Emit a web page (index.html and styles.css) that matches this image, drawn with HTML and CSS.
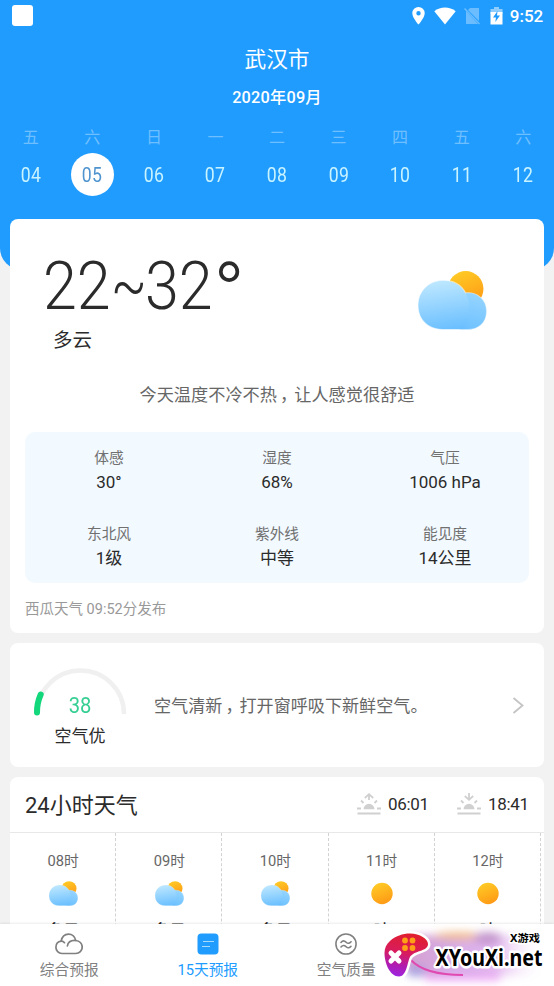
FILE: index.html
```html
<!DOCTYPE html>
<html lang="zh-CN">
<head>
<meta charset="utf-8">
<title>武汉市天气</title>
<link rel="stylesheet" href="styles.css">
</head>
<body>
<svg width="0" height="0" class="defs">
  <defs>
    <linearGradient id="sun" x1="0.3" y1="0" x2="0.7" y2="1"><stop offset="0" stop-color="#ffcb25"/><stop offset="1" stop-color="#ff9815"/></linearGradient>
    <linearGradient id="cloud" x1="0.3" y1="0" x2="0.5" y2="1"><stop offset="0" stop-color="#bfe8ff"/><stop offset="1" stop-color="#6abfff"/></linearGradient>
    <linearGradient id="puff" x1="0" y1="0.6" x2="1" y2="0.4"><stop offset="0" stop-color="#6cbdfb"/><stop offset="0.35" stop-color="#7dc9ff"/><stop offset="1" stop-color="#8fd2ff"/></linearGradient>
    <symbol id="cloudy" viewBox="0 0 68 58">
      <circle cx="47" cy="17.500" r="17.500" fill="url(#sun)"/>
      <path d="M25 9c10 0 18 5 22 12.500C58.500 20.500 67.500 28 67.500 39.500S59.500 57.500 49.500 57.500H24C9 57.500 0 47 0 34 0 19 11 9 25 9z" fill="url(#cloud)" stroke="#fff" stroke-opacity=".55" stroke-width="1"/>
      <path d="M47 21.500c11-1.500 20.500 6.500 20.500 17.500S59.500 57.500 49.500 57.500H41c7-6 10-14 9.500-24-.3-4-1.400-8-3.500-12z" fill="url(#puff)" opacity=".4"/>
    </symbol>
    <symbol id="sunny" viewBox="0 0 22 22"><circle cx="11" cy="11" r="10.700" fill="url(#sun)"/></symbol>
  </defs>
</svg>
<div class="app">
  <main class="content">
    <header class="hero">
      <div class="status">
        <span class="app-mark"></span>
        <div class="status-icons">
          <svg width="13" height="18" viewBox="0 0 13 18"><path fill="#fff" fill-rule="evenodd" d="M6.500 0A6.200 6.200 0 0 0 .300 6.200C.300 10.800 6.500 17.500 6.500 17.500s6.200-6.700 6.200-11.300A6.200 6.200 0 0 0 6.500 0zm0 4a2.200 2.200 0 1 1 0 4.400 2.200 2.200 0 0 1 0-4.400z"/></svg>
          <svg width="22" height="18" viewBox="0 0 22 18"><path fill="#fff" d="M.300 4.300C6.500-.700 15.500-.700 21.700 4.300L11 17.500z"/></svg>
          <svg width="17" height="18" viewBox="0 0 17 18"><path fill="#6bbdff" d="M6 1h9v13L4 3zM2 4l12 13H2z"/><path d="M.500 1.500l15 15.500" stroke="#6bbdff" stroke-width="1.500"/></svg>
          <svg width="13" height="18" viewBox="0 0 13 18"><path fill="#8fcdff" d="M4 0h5v2h3.500v5H.500V2H4z"/><path fill="#fff" d="M.500 5h12v12.500H.500z"/><path fill="#209cff" d="M7.500 4L3 10.500h3L5.300 15 10 8.500H7z"/></svg>
          <span class="clock">9:52</span>
        </div>
      </div>
      <h1 class="city">武汉市</h1>
      <div class="month">2020年09月</div>
      <div class="week">
        <div class="day"><span class="dow">五</span><span class="date"><b>04</b></span></div>
        <div class="day selected"><span class="dow">六</span><span class="date"><b>05</b></span></div>
        <div class="day"><span class="dow">日</span><span class="date"><b>06</b></span></div>
        <div class="day"><span class="dow">一</span><span class="date"><b>07</b></span></div>
        <div class="day"><span class="dow">二</span><span class="date"><b>08</b></span></div>
        <div class="day"><span class="dow">三</span><span class="date"><b>09</b></span></div>
        <div class="day"><span class="dow">四</span><span class="date"><b>10</b></span></div>
        <div class="day"><span class="dow">五</span><span class="date"><b>11</b></span></div>
        <div class="day"><span class="dow">六</span><span class="date"><b>12</b></span></div>
      </div>
    </header>

    <section class="card today">
      <div class="summary">
        <div>
          <div class="temp"><span class="num">22</span><span class="tilde">~</span><span class="num">32</span><span class="deg">°</span></div>
          <div class="cond">多云</div>
        </div>
        <svg class="big-icon" width="69" height="59"><use href="#cloudy"/></svg>
      </div>
      <p class="advice">今天温度不冷不热<span class="comma">，</span>让人感觉很舒适</p>
      <div class="metrics">
        <div class="metric"><span>体感</span><strong>30°</strong></div>
        <div class="metric"><span>湿度</span><strong>68%</strong></div>
        <div class="metric"><span>气压</span><strong>1006 hPa</strong></div>
        <div class="metric"><span>东北风</span><strong>1级</strong></div>
        <div class="metric"><span>紫外线</span><strong>中等</strong></div>
        <div class="metric"><span>能见度</span><strong>14公里</strong></div>
      </div>
      <div class="source">西瓜天气 09:52分发布</div>
    </section>

    <section class="card air">
      <div class="gauge">
        <svg width="94" height="52" viewBox="0 0 94 52">
          <path d="M4 48A43.500 43.500 0 0 1 91 48" fill="none" stroke="#f0f0f0" stroke-width="4.500"/>
          <path d="M4 46.500A43.500 43.500 0 0 1 7.700 28.500" fill="none" stroke="#12d77b" stroke-width="6" stroke-linecap="round"/>
        </svg>
        <span class="aqi">38</span>
        <span class="level">空气优</span>
      </div>
      <p class="tip">空气清新<span class="comma">，</span>打开窗呼吸下新鲜空气。</p>
      <svg class="chevron" width="12" height="17" viewBox="0 0 12 17"><path d="M1.500 1l9 7.500-9 7.500" fill="none" stroke="#c4c4c4" stroke-width="1.800"/></svg>
    </section>

    <section class="card hourly">
      <div class="hourly-head">
        <h2>24小时天气</h2>
        <div class="sun-time">
          <svg width="24" height="22" viewBox="0 0 24 22" fill="none" stroke="#d0d0d0" stroke-width="1.800"><path d="M.500 20.500h23M12 7V1.500M7.800 5L12 1.200 16.200 5M4 7.500l2.500 2.500M20 7.500L17.500 10M0 15.500h4M20 15.500h4"/><path d="M6.500 16.300a5.500 5.500 0 0 1 11 0z" fill="#d0d0d0" stroke="none"/></svg>
          <span>06:01</span>
        </div>
        <div class="sun-time">
          <svg width="24" height="22" viewBox="0 0 24 22" fill="none" stroke="#d0d0d0" stroke-width="1.800"><path d="M.500 20.500h23M12 0v6.500M7.800 3L12 6.800 16.200 3M4 7.500l2.500 2.500M20 7.500L17.500 10M0 15.500h4M20 15.500h4"/><path d="M6.500 16.300a5.500 5.500 0 0 1 11 0z" fill="#d0d0d0" stroke="none"/></svg>
          <span>18:41</span>
        </div>
      </div>
      <div class="hours">
        <div class="hour"><span>08时</span><svg width="29" height="25"><use href="#cloudy"/></svg><strong>多云</strong></div>
        <div class="hour"><span>09时</span><svg width="29" height="25"><use href="#cloudy"/></svg><strong>多云</strong></div>
        <div class="hour"><span>10时</span><svg width="29" height="25"><use href="#cloudy"/></svg><strong>多云</strong></div>
        <div class="hour"><span>11时</span><svg width="22" height="25"><use href="#sunny"/></svg><strong>晴</strong></div>
        <div class="hour"><span>12时</span><svg width="22" height="25"><use href="#sunny"/></svg><strong>晴</strong></div>
      </div>
    </section>
  </main>

  <nav class="tabs">
    <div class="tab">
      <svg width="28" height="22" viewBox="0 0 28 22" fill="none" stroke="#808080" stroke-width="1.700" stroke-linecap="round"><path d="M7 20.500C3.500 20.500.900 17.700.900 14.200c0-3.300 2.300-5.700 5.300-6.100C7 4 9.700 1.200 13.500 1.200c3.700 0 6.600 2.600 7.200 6.300 3.800.200 6.500 3 6.500 6.500 0 3.600-2.800 6.500-6.500 6.500z"/><path d="M6.200 8.100c1.500 0 2.600.600 3.300 1.600M20.700 7.500c-4.400-.300-7.700 1.700-8.300 5.300"/></svg>
      <span>综合预报</span>
    </div>
    <div class="tab active">
      <svg width="22" height="22" viewBox="0 0 22 22"><rect x=".500" y=".500" width="21" height="21" rx="4" fill="#209cff"/><path d="M6 8.500h11M5 13.500h8" stroke="#a8dcff" stroke-width="1.200"/></svg>
      <span>15天预报</span>
    </div>
    <div class="tab">
      <svg width="24" height="24" viewBox="0 0 24 24" fill="none" stroke="#808080" stroke-width="1.700" stroke-linecap="round"><circle cx="12" cy="12" r="11"/><path d="M6.500 10.300c2.500-3 4.500-1.500 6 0s3.500 1 5-.800M6.500 15.300c2.500-3 4.500-1.500 6 0s3.500 1 5-.800"/></svg>
      <span>空气质量</span>
    </div>
    <div class="tab"></div>
    <svg class="brand" width="176" height="70" viewBox="378 916 176 70">
      <defs>
        <linearGradient id="pad" x1="0.5" y1="0" x2="0.3" y2="1"><stop offset="0" stop-color="#e01e2f"/><stop offset=".45" stop-color="#d81c5e"/><stop offset=".75" stop-color="#b01cb0"/><stop offset="1" stop-color="#9c24e0"/></linearGradient>
        <linearGradient id="glow" x1="0" y1="0" x2="1" y2="0"><stop offset="0" stop-color="#d9a0cd"/><stop offset=".3" stop-color="#d3a9e4"/><stop offset=".65" stop-color="#e3b8ef"/><stop offset="1" stop-color="#fff" stop-opacity="0"/></linearGradient>
        <filter id="soft" x="-20%" y="-40%" width="140%" height="180%"><feGaussianBlur stdDeviation="4"/></filter>
      </defs>
      <g filter="url(#soft)">
        <rect x="404" y="935" width="141" height="41" rx="12" fill="url(#glow)"/>
        <ellipse cx="458" cy="936" rx="24" ry="4" fill="#f1bb8d"/>
        <ellipse cx="488" cy="938" rx="14" ry="6" fill="#c394cc"/>
        <ellipse cx="416" cy="971" rx="10" ry="6" fill="#a9a1df"/>
        <path d="M425 978h75" stroke="#f0a6f6" stroke-width="5"/>
      </g>
      <path d="M411 960c10 11 28 15 52 15" fill="none" stroke="#e04ab0" stroke-width="2"/>
      <path d="M390 941c5-5 13-7.500 20-7.500 10 0 18 5.500 18 10.500 0 8-15 6-18.500 14-2.500 7-3.500 18.500-10.500 18.500-9 0-14.500-13-14.500-23.500 0-5 2-9 5.500-12z" fill="url(#pad)" stroke="#fff" stroke-width="5" stroke-linejoin="round" paint-order="stroke"/>
      <g fill="#ffa116"><circle cx="405" cy="940.500" r="2.900"/><circle cx="412.500" cy="940.500" r="2.900"/><circle cx="405" cy="948" r="2.900"/><circle cx="412.500" cy="948" r="2.900"/></g>
      <path d="M391 953l8 8M399 953l-8 8" stroke="#fff" stroke-width="5" stroke-linecap="round"/>
      <text class="brand-small" x="510" y="942" textLength="30" lengthAdjust="spacingAndGlyphs">X游戏</text>
      <text class="brand-name" x="435.500" y="966" textLength="107" lengthAdjust="spacingAndGlyphs">XYouXi.net</text>
    </svg>
  </nav>
</div>
</body>
</html>
```
FILE: styles.css
```css
* { box-sizing: border-box; margin: 0; padding: 0; }
body {
  width: 554px;
  height: 986px;
  overflow: hidden;
  background: #f2f2f2;
  font-family: Roboto, "Noto Sans CJK SC", sans-serif;
  color: #2b2b2b;
}
svg { display: block; flex: none; }
.defs { position: absolute; }
.app { display: flex; flex-direction: column; height: 986px; }
.content { height: 924px; overflow: hidden; }

.hero {
  height: 270px;
  background: #209cff;
  border-radius: 0 0 22px 22px;
  color: #fff;
  text-align: center;
}
.status { display: flex; justify-content: space-between; height: 32px; padding: 5px 10px 0 12px; }
.app-mark { width: 21px; height: 21px; background: #fff; border-radius: 3px; }
.status-icons { display: flex; align-items: flex-start; padding-top: 2px; }
.status-icons svg:nth-child(2) { margin-left: 9px; }
.status-icons svg:nth-child(3) { margin-left: 8px; }
.status-icons svg:nth-child(4) { margin-left: 9px; }
.clock { width: 35px; margin-left: 6.500px; font-size: 17px; font-weight: 500; line-height: 19px; white-space: nowrap; }
.city { height: 52px; font-size: 21.700px; font-weight: 400; line-height: 55px; }
.month { height: 26px; font-size: 16.300px; font-weight: 500; line-height: 27px; letter-spacing: .2px; }
.week { display: grid; grid-template-columns: repeat(9, 1fr); padding-top: 15px; }
.day { display: flex; flex-direction: column; align-items: center; }
.dow { height: 28px; font-size: 16px; line-height: 26px; color: #6fbfff; }
.date { width: 43px; height: 43px; border-radius: 50%; line-height: 44px; font-size: 20.500px; color: #c9f4ff; }
.date b { display: inline-block; font-weight: 400; letter-spacing: .5px; transform: scaleX(.86); }
.selected .date { background: #fff; color: #4f94cf; }

.card { width: 534px; margin: 0 auto 10px; background: #fff; border-radius: 8px; }
.today { height: 414px; margin-top: -51px; padding: 0 15px; }
.summary { display: flex; justify-content: space-between; height: 158px; }
.temp { display: flex; height: 105px; padding: 27px 0 0 18px; font-size: 67px; font-weight: 300; line-height: 80px; white-space: nowrap; }
.temp span { transform-origin: left; }
.num { width: 69px; transform: scaleX(.91); }
.tilde { width: 33px; transform: translate(-1px, -1px) scaleX(.78); }
.deg { margin-left: -1px; font-size: 85px; line-height: 97px; font-weight: 300; }
.cond { padding-left: 28px; font-size: 19.500px; line-height: 33px; }
.big-icon { margin: 52px 42px 0 0; }
.advice { height: 55px; color: #666; font-size: 17.200px; line-height: 36px; text-align: center; }
.comma { display: inline-block; transform: translateX(3px); }
.metrics { display: grid; grid-template-columns: repeat(3, 1fr); height: 151px; padding-top: 13px; background: #f2f9ff; border-radius: 10px; }
.metric { display: flex; flex-direction: column; align-items: center; height: 76px; }
.metric span { height: 24px; font-size: 14.700px; line-height: 27px; color: #707070; }
.metric strong { font-size: 17px; font-weight: 400; line-height: 26px; }
.source { color: #999; font-size: 14.500px; line-height: 54px; }

.air { display: flex; height: 124px; }
.gauge { display: flex; flex-direction: column; align-items: center; width: 94px; margin-left: 23px; padding-top: 23px; }
.gauge svg { height: 52px; }
.aqi { height: 28px; margin-top: -26px; font-size: 21.500px; line-height: 28px; color: #36cf93; transform: scaleX(.94); }
.level { font-size: 17px; line-height: 33px; }
.tip { margin-left: 27px; font-size: 17.100px; line-height: 127px; color: #666; white-space: nowrap; }
.chevron { margin: 54px 20px 0 auto; }

.hourly { height: 220px; overflow: hidden; }
.hourly-head { display: flex; height: 56px; padding: 0 15px; border-bottom: 1px solid #e8e8e8; }
.hourly-head h2 { flex: 1; font-size: 22px; font-weight: 400; line-height: 58px; }
.sun-time { display: flex; padding-top: 16px; margin-left: 28px; }
.sun-time span { width: 41px; margin-left: 7px; font-size: 17px; line-height: 23px; letter-spacing: -.3px; white-space: nowrap; }
.hours { display: grid; grid-template-columns: repeat(5, 106.200px); }
.hour { display: flex; flex-direction: column; align-items: center; height: 164px; padding-left: 1px; border-right: 1px dashed #d2d2d2; }
.hour span { height: 48px; padding-top: 15px; font-size: 14.700px; line-height: 26px; color: #666; }
.hour strong { margin-top: 14px; font-size: 16.500px; font-weight: 500; line-height: 24px; }

.tabs { position: relative; display: grid; grid-template-columns: repeat(4, 1fr); height: 62px; background: #fff; box-shadow: 0 -1px 2px rgba(0, 0, 0, .08); }
.tab { display: flex; flex-direction: column; align-items: center; height: 62px; padding-top: 9px; font-size: 14.700px; color: #808080; }
.tab svg { height: 22px; }
.tab span { height: 28px; line-height: 30px; }
.tab.active { color: #209cff; }
.brand { position: absolute; right: 0; bottom: 0; }
.brand text { fill: #000; stroke: #fff; paint-order: stroke; stroke-linejoin: round; font-weight: 700; }
.brand-small { font-family: "Noto Sans", "Noto Sans CJK SC", sans-serif; font-size: 10.500px; stroke-width: 3px; }
.brand-name { font-family: "Noto Sans", sans-serif; font-size: 24px; stroke-width: 5px; }
```
